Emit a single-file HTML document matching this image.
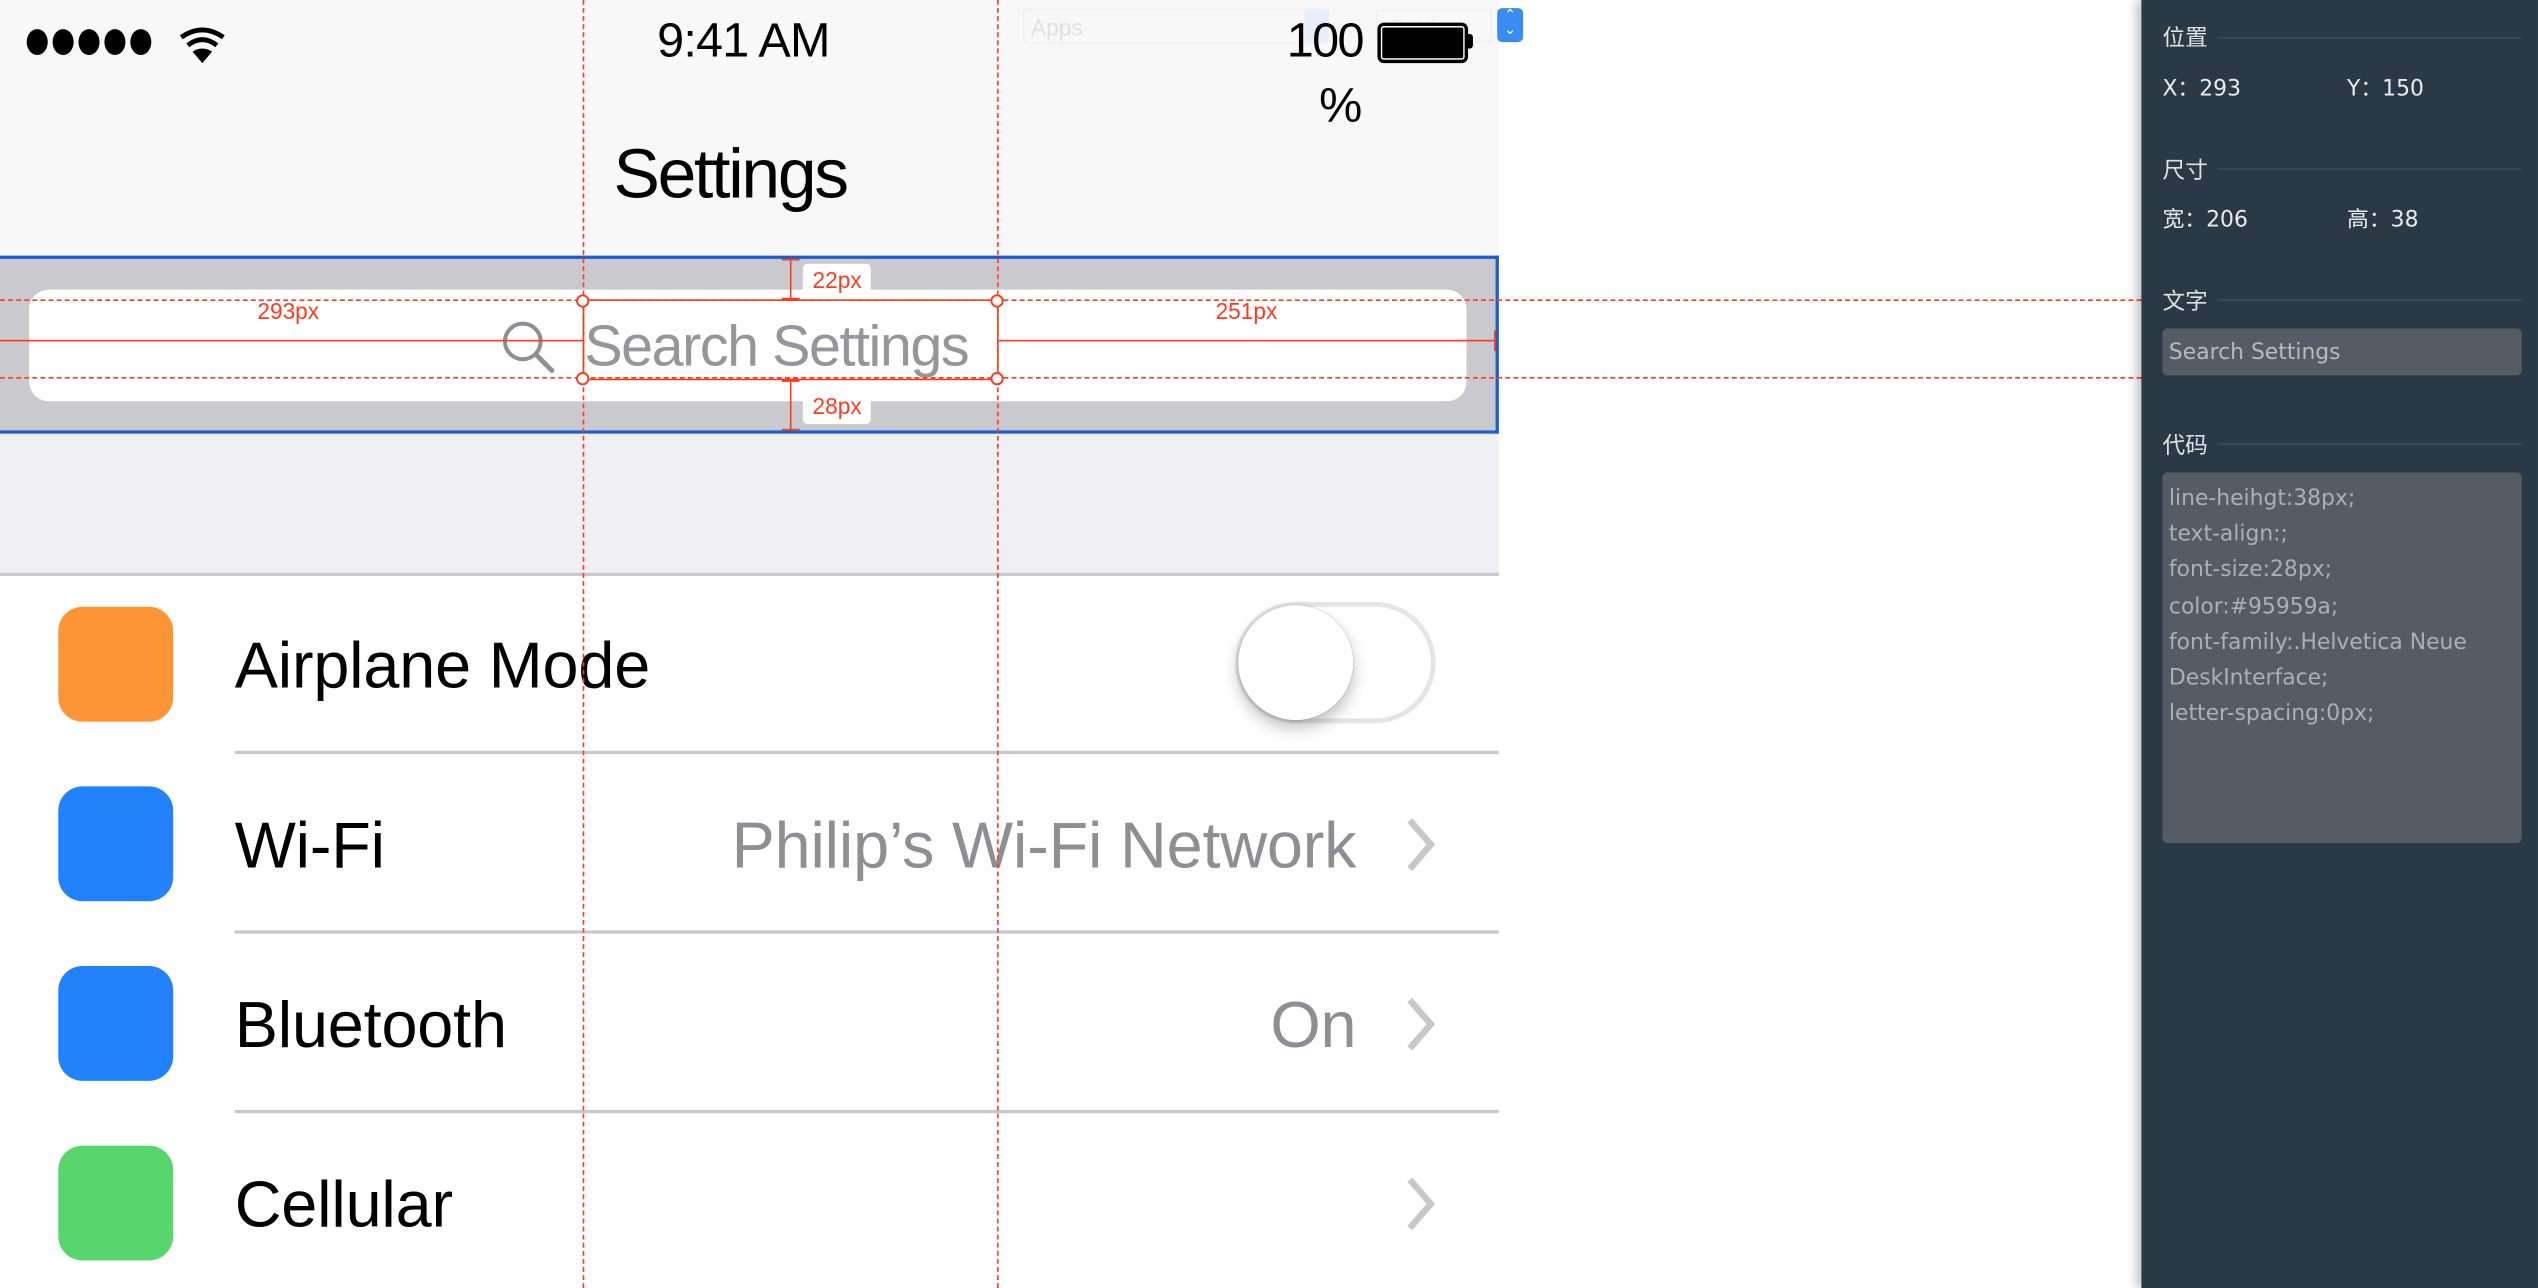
<!DOCTYPE html>
<html><head><meta charset="utf-8"><style>
html,body{margin:0;padding:0;width:2538px;height:1288px;overflow:hidden;background:#fff}
#w{position:absolute;left:0;top:0;width:1568px;height:796px;transform:scale(1.6186,1.6181);transform-origin:0 0;font-family:"Liberation Sans",sans-serif}
.a{position:absolute}
.ph{color:#000;white-space:nowrap}
.row{position:absolute;left:0;width:926px;background:#fff}
.ic{position:absolute;left:36px;width:71px;height:71px;border-radius:15px}
.lb{position:absolute;left:145px;font-size:40px;letter-spacing:-0.1px;line-height:40px}
.val{position:absolute;right:88px;font-size:40px;letter-spacing:-0.1px;color:#8e8e93;line-height:40px;white-space:nowrap}
.sep{position:absolute;left:145px;width:781px;height:2px;background:#c8c7cc}
.chev{position:absolute;left:866px}
.rp{color:#e8ecef;font-family:"DejaVu Sans","Noto Sans CJK SC",sans-serif;font-size:13.5px;white-space:nowrap}
.hd{position:absolute;left:1336px;font-size:14px;color:#dde2e6;font-family:"Noto Sans CJK SC",sans-serif}
.hl{position:absolute;left:1370px;width:188px;height:1px;background:#3e4b59}
.red{background:#ff3b1f}
.tag{position:absolute;background:#fff;color:#ff3b1f;font-size:14px;padding:0 6px;line-height:18px;border-radius:3px}
</style></head><body><div id="w">
<div class="a" style="left:0;top:0;width:926px;height:158px;background:#f8f8f8"></div>
<div class="a" style="left:0;top:158px;width:926px;height:110px;background:#c9c9ce"></div>
<div class="a" style="left:0;top:268px;width:926px;height:87px;background:#efeff4"></div>
<div class="a" style="left:0;top:354px;width:926px;height:2px;background:#c8c7cc"></div>
<svg class="a" style="left:14px;top:17px" width="130" height="22"><g fill="#000"><ellipse cx="9" cy="9" rx="6.5" ry="8"/><ellipse cx="25" cy="9" rx="6.5" ry="8"/><ellipse cx="41" cy="9" rx="6.5" ry="8"/><ellipse cx="57" cy="9" rx="6.5" ry="8"/><ellipse cx="73" cy="9" rx="6.5" ry="8"/></g>
<g fill="none" stroke="#000" stroke-width="3"><path d="M98 6 Q111 -3 124 6"/><path d="M102 11 Q111 4 120 11"/></g><path d="M105 15 Q111 11 117 15 L111 22Z" fill="#000"/></svg>
<div class="a" style="left:632px;top:5px;width:188px;height:22px;border:1px solid #f0f0f0;border-radius:3px;color:#e0e0e0;font-size:14px;line-height:22px;padding-left:4px;box-sizing:border-box">Apps</div>
<div class="a" style="left:806px;top:6px;width:15px;height:20px;background:#e6eef9"></div>
<div class="a" style="left:850px;top:6px;width:72px;height:20px;border:1px solid #f2f2f2;color:#ededed;font-size:14px;line-height:20px;padding-left:8px;box-sizing:border-box;overflow:hidden">Settings</div>
<div class="a" style="left:925px;top:5px;width:16px;height:21px;background:#3b8cf0;border-radius:3px;color:#fff;font-size:9px;line-height:9px;text-align:center">⌃<br>⌄</div>
<div class="a ph" style="left:406px;top:9px;font-size:30px;letter-spacing:-0.5px">9:41 AM</div>
<div class="a ph" style="left:795px;top:9px;font-size:30px;letter-spacing:-1px">100</div>
<div class="a ph" style="left:815px;top:49px;font-size:30px">%</div>
<div class="a" style="left:851px;top:14px;width:52px;height:21px;border:2px solid #000;border-radius:4px;background:#000;box-shadow:inset 0 0 0 1px #fff"></div>
<div class="a" style="left:906px;top:21px;width:4px;height:9px;background:#000;border-radius:0 2px 2px 0"></div>
<div class="a ph" style="left:379px;top:84px;font-size:43px;letter-spacing:-1.4px">Settings</div>
<div class="a" style="left:18px;top:179px;width:888px;height:69px;background:#fff;border-radius:12px"></div>
<svg class="a" style="left:308px;top:196px" width="40" height="38"><circle cx="15" cy="15" r="11" fill="none" stroke="#8e8e93" stroke-width="2.5"/><path d="M23 23 L33 33" stroke="#8e8e93" stroke-width="3" stroke-linecap="round"/></svg>
<div class="a" style="left:361px;top:192px;font-size:35.5px;letter-spacing:-0.9px;color:#95959a;line-height:44px;white-space:nowrap">Search Settings</div>
<div class="a" style="left:0;top:158px;width:926px;height:110px;border:2px solid #1a5fd0;box-sizing:border-box;border-left:none"></div>
<!-- rows -->
<div class="row" style="top:356px;height:110px"><div class="ic" style="top:19px;background:#fd9435"></div><div class="lb" style="top:36px">Airplane Mode</div>
<div class="a" style="left:763px;top:16px;width:124px;height:75px;border:3px solid #e5e5e5;border-radius:40px;box-sizing:border-box;background:#fff"></div>
<div class="a" style="left:765px;top:18px;width:71px;height:71px;border-radius:50%;background:#fff;box-shadow:0 5px 10px rgba(0,0,0,.25),0 0 1px rgba(0,0,0,.3)"></div></div>
<div class="row" style="top:466px;height:110px"><div class="ic" style="top:20px;background:#2282fb"></div><div class="lb" style="top:37px">Wi-Fi</div><div class="val" style="top:37px">Philip’s Wi-Fi Network</div>
<svg class="chev" style="top:38px" width="24" height="36"><path d="M5 3 L18 18 L5 33" fill="none" stroke="#c7c7cc" stroke-width="4"/></svg></div>
<div class="row" style="top:577px;height:110px"><div class="ic" style="top:20px;background:#2282fb"></div><div class="lb" style="top:37px">Bluetooth</div><div class="val" style="top:37px">On</div>
<svg class="chev" style="top:38px" width="24" height="36"><path d="M5 3 L18 18 L5 33" fill="none" stroke="#c7c7cc" stroke-width="4"/></svg></div>
<div class="row" style="top:688px;height:108px"><div class="ic" style="top:20px;background:#58d66d"></div><div class="lb" style="top:37px">Cellular</div>
<svg class="chev" style="top:38px" width="24" height="36"><path d="M5 3 L18 18 L5 33" fill="none" stroke="#c7c7cc" stroke-width="4"/></svg></div>
<div class="sep" style="top:464px"></div>
<div class="sep" style="top:575px"></div>
<div class="sep" style="top:686px"></div>
<!-- measurement -->
<div class="a" style="left:360px;top:0;height:796px;border-left:1px dashed #ff3b1f"></div>
<div class="a" style="left:616px;top:0;height:796px;border-left:1px dashed #ff3b1f"></div>
<div class="a" style="left:0;top:185px;width:1323px;border-top:1px dashed #ff3b1f"></div>
<div class="a" style="left:0;top:233px;width:1323px;border-top:1px dashed #ff3b1f"></div>
<div class="a" style="left:360px;top:185px;width:255px;height:48px;border:1px solid #ff3b1f"></div>
<div class="a red" style="left:0;top:210px;width:360px;height:1px"></div>
<div class="a red" style="left:617px;top:210px;width:306px;height:1px"></div>
<div class="a red" style="left:923px;top:204px;width:1px;height:13px"></div>
<div class="a red" style="left:488px;top:160px;width:1px;height:25px"></div>
<div class="a red" style="left:483px;top:160px;width:11px;height:1px"></div>
<div class="a red" style="left:483px;top:184px;width:11px;height:2px"></div>
<div class="a red" style="left:488px;top:234px;width:1px;height:32px"></div>
<div class="a red" style="left:483px;top:234px;width:11px;height:2px"></div>
<div class="a red" style="left:483px;top:265px;width:11px;height:1px"></div>
<svg class="a" style="left:0;top:0" width="926" height="300"><g fill="#fff" stroke="#ff3b1f" stroke-width="1.2"><circle cx="360" cy="186" r="3.5"/><circle cx="616" cy="186" r="3.5"/><circle cx="360" cy="234" r="3.5"/><circle cx="616" cy="234" r="3.5"/></g></svg>
<div class="tag" style="left:153px;top:183px;background:transparent">293px</div>
<div class="tag" style="left:745px;top:183px;background:transparent">251px</div>
<div class="tag" style="left:496px;top:163px;height:21px;line-height:21px">22px</div>
<div class="tag" style="left:496px;top:241px;height:21px;line-height:21px">28px</div>
<!-- right panel -->
<div class="a" style="left:1323px;top:0;width:245px;height:796px;background:#2b3846;box-shadow:-3px 0 6px rgba(0,0,0,.25)"></div>
<div class="hd" style="top:13px">位置</div><div class="hl" style="top:23px"></div>
<div class="a rp" style="left:1336px;top:43px">X：293</div><div class="a rp" style="left:1450px;top:43px">Y：150</div>
<div class="hd" style="top:95px">尺寸</div><div class="hl" style="top:104px"></div>
<div class="a rp" style="left:1336px;top:124px">宽：206</div><div class="a rp" style="left:1450px;top:124px">高：38</div>
<div class="hd" style="top:176px">文字</div><div class="hl" style="top:185px"></div>
<div class="a rp" style="left:1336px;top:203px;width:222px;height:29px;background:#565c66;border-radius:3px;color:#b6bbc0;line-height:30px;padding-left:4px;box-sizing:border-box">Search Settings</div>
<div class="hd" style="top:265px">代码</div><div class="hl" style="top:274px"></div>
<div class="a rp" style="left:1336px;top:292px;width:222px;height:229px;background:#565c66;border-radius:3px;color:#aab0b6;line-height:22.2px;padding:5px 0 0 4px;box-sizing:border-box">line-heihgt:38px;<br>text-align:;<br>font-size:28px;<br>color:#95959a;<br>font-family:.Helvetica Neue<br>DeskInterface;<br>letter-spacing:0px;</div>
</div></body></html>
